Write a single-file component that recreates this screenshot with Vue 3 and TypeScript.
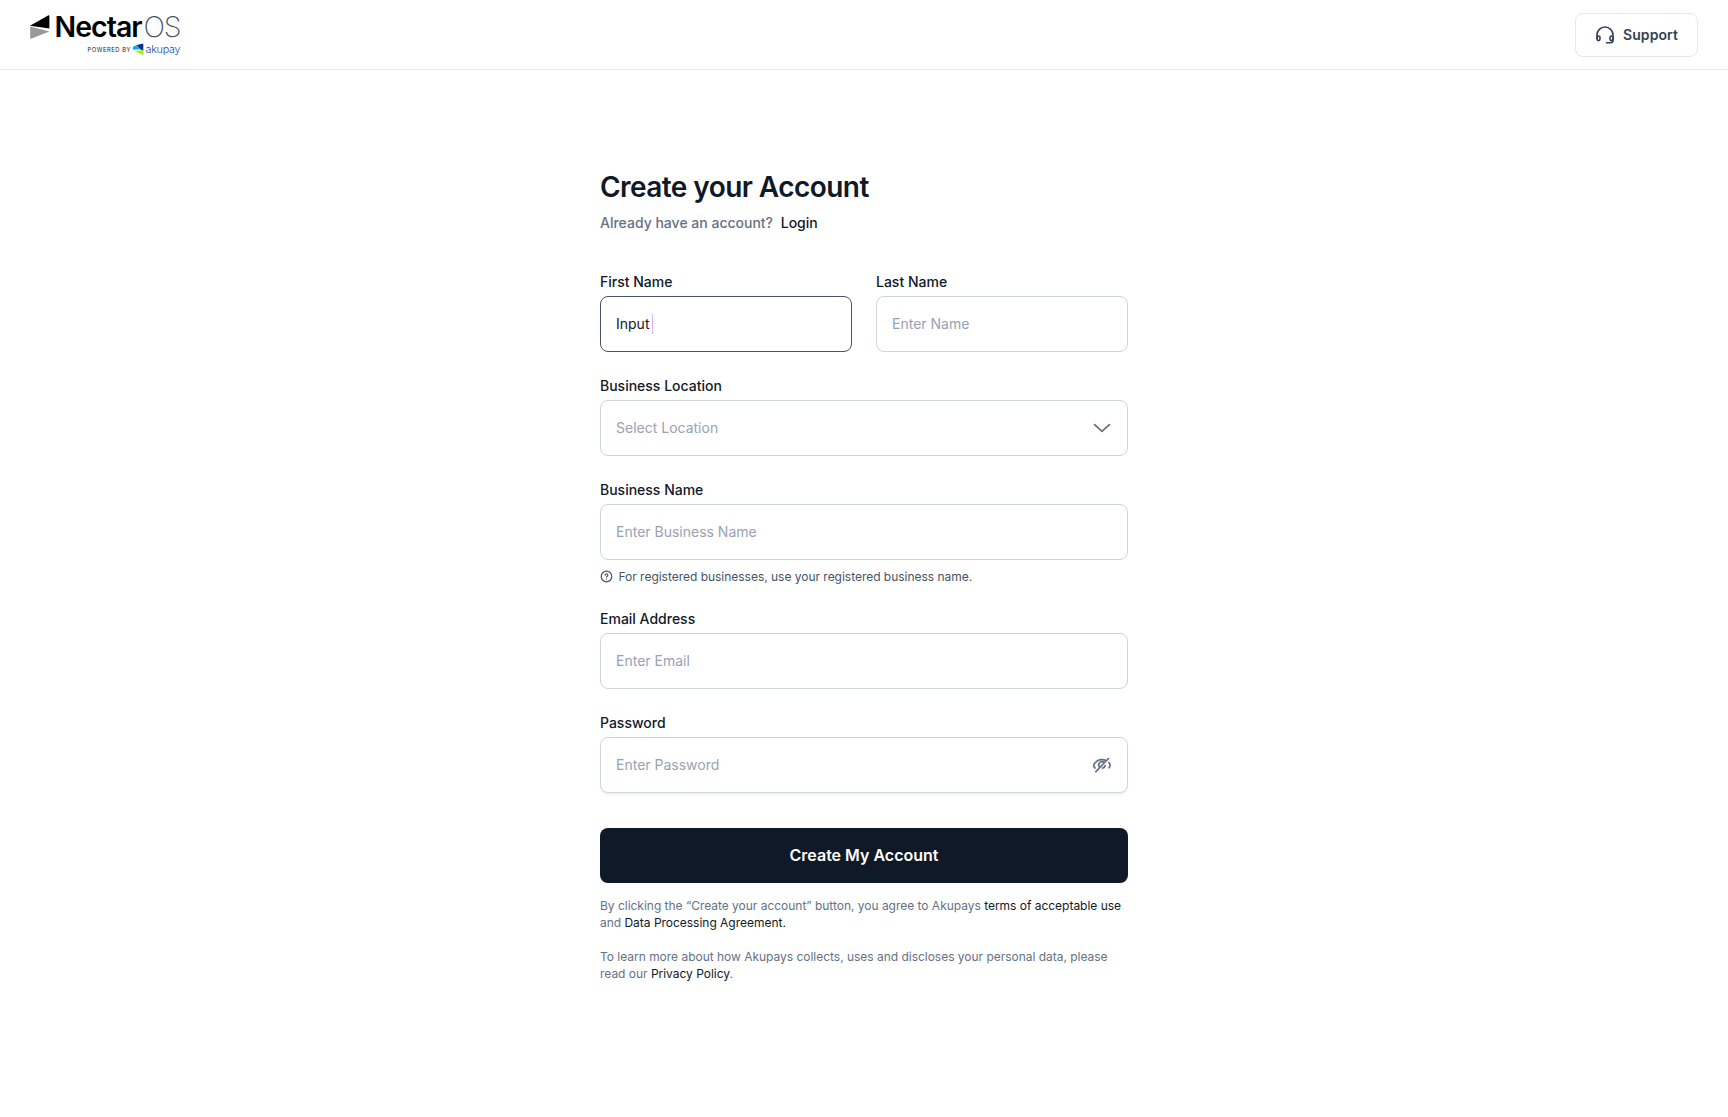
<script setup lang="ts">
import { ref } from 'vue';

// Form state
const firstName = ref('Input');
const lastName = ref('');
const businessName = ref('');
const email = ref('');
const password = ref('');
const showPassword = ref(false);

const togglePassword = () => {
  showPassword.value = !showPassword.value;
};
</script>

<template>
  <div class="page">
    <header class="header">
      <svg class="logo" width="152" height="44" viewBox="0 0 152 44" role="img" aria-label="NectarOS powered by akupay">
        <path d="M0 10.800 18.500 0.200q.9-.3.900.6v12.600z" fill="#000" />
        <path d="M.2 11.500 19.400 16.500 1 23.700q-.8.200-.8-.600z" fill="#999" />
        <text class="logo-name" x="24.600" y="22.200" textLength="88">Nectar</text>
        <text class="logo-os" x="113.500" y="22.200" textLength="38">OS</text>
        <text class="logo-powered" x="57.500" y="36.900" textLength="43">POWERED BY</text>
        <path d="M106.500 30 113.300 28.600v7.200l-3.300-1.600z" fill="#0a2f8f" />
        <path d="M102.800 31.800 107 30 110.200 34.300 102.800 34.700z" fill="#18a5e8" />
        <path d="M104.200 35.700 113.300 35.200v5z" fill="#a4ee1a" />
        <text class="logo-akupay" x="115.500" y="38" textLength="35">akupay</text>
      </svg>
      <button class="support-button" type="button">
        <svg width="20" height="20" viewBox="0 0 20 20" fill="none" stroke="currentColor" stroke-width="1.600" stroke-linecap="round" stroke-linejoin="round">
          <path d="M2 13.500V10a8 8 0 0 1 16 0v5.300a2.500 2.500 0 0 1-2.500 2.500H11.500" />
          <rect x="2" y="11" width="3" height="4.600" rx="1.500" />
          <rect x="15" y="11" width="3" height="4.600" rx="1.500" />
        </svg>
        <span>Support</span>
      </button>
    </header>

    <main class="content">
      <h1 class="title">Create your Account</h1>
      <p class="subtitle">Already have an account? <a class="login">Login</a></p>

      <form class="form" @submit.prevent>
        <div class="row">
          <div class="field">
            <label class="label">First Name</label>
            <div class="control focused">
              <span class="value">{{ firstName }}</span>
              <span class="caret"></span>
            </div>
          </div>
          <div class="field">
            <label class="label" for="last-name">Last Name</label>
            <div class="control">
              <input id="last-name" v-model="lastName" type="text" placeholder="Enter Name" />
            </div>
          </div>
        </div>

        <div class="field">
          <label class="label">Business Location</label>
          <div class="control">
            <span class="placeholder">Select Location</span>
            <svg class="icon" width="20" height="20" viewBox="0 0 20 20" fill="none" stroke="currentColor" stroke-width="1.800" stroke-linecap="round" stroke-linejoin="round">
              <path d="M2.600 6.700 10 13.400l7.400-6.700" />
            </svg>
          </div>
        </div>

        <div class="field">
          <label class="label" for="business-name">Business Name</label>
          <div class="control">
            <input id="business-name" v-model="businessName" type="text" placeholder="Enter Business Name" />
          </div>
          <div class="hint">
            <svg width="13" height="13" viewBox="0 0 13 13" fill="none" stroke="currentColor" stroke-width="1.200" stroke-linecap="round">
              <circle cx="6.500" cy="6.500" r="5.300" />
              <path d="M5.200 5.200a1.300 1.300 0 1 1 2 1.100c-.5.300-.7.500-.7.900M6.500 9v.1" />
            </svg>
            <span>For registered businesses, use your registered business name.</span>
          </div>
        </div>

        <div class="field">
          <label class="label" for="email">Email Address</label>
          <div class="control">
            <input id="email" v-model="email" type="text" placeholder="Enter Email" />
          </div>
        </div>

        <div class="field">
          <label class="label" for="password">Password</label>
          <div class="control raised">
            <input id="password" v-model="password" :type="showPassword ? 'text' : 'password'" placeholder="Enter Password" />
            <svg class="icon" width="20" height="20" viewBox="0 0 20 20" fill="none" stroke="currentColor" stroke-width="1.700" stroke-linecap="round" @click="togglePassword">
              <path d="M3 13C1.300 11.500 1.300 9.800 2.800 8.200c3.300-4 8-4.600 11.400-2.400M16.800 7.500c1.700 1.800 1.700 3.300.3 5.200M7.500 12.200a3.300 3.300 0 0 1 4.800-4.500M13.200 10.500a3.300 3.300 0 0 1-2.700 2.700M3.800 16.700 16.500 3.500" />
            </svg>
          </div>
        </div>

        <button class="submit-button" type="submit">Create My Account</button>
      </form>

      <p class="legal">
        By clicking the “Create your account” button, you agree to Akupays <a>terms of acceptable use</a><br />
        and <a>Data Processing Agreement.</a>
      </p>
      <p class="legal">
        To learn more about how Akupays collects, uses and discloses your personal data, please<br />
        read our <a>Privacy Policy</a>.
      </p>
    </main>
  </div>
</template>

<style>
body {
  background: #fff;
}
</style>

<style scoped>
.page {
  min-height: 1117px;
  background: #fff;
  color: #101928;
  font-family: Inter, 'Liberation Sans', sans-serif;
}

.header {
  display: flex;
  align-items: center;
  justify-content: space-between;
  box-sizing: border-box;
  height: 70px;
  padding: 0 30px;
  border-bottom: 1px solid #e4e7ec;
}

.logo {
  margin-top: 5px;
  overflow: visible;
}

.logo-name {
  font-size: 28.5px;
  font-weight: 600;
  fill: #000;
}

.logo-os {
  font-size: 28.5px;
  font-weight: 200;
  fill: #475367;
}

.logo-powered {
  font-size: 5.8px;
  font-weight: 400;
  fill: #222;
}

.logo-akupay {
  font-size: 10.8px;
  font-weight: 300;
  fill: #2449a8;
}

.support-button {
  display: flex;
  align-items: center;
  justify-content: center;
  gap: 8px;
  box-sizing: border-box;
  width: 123px;
  height: 44px;
  padding: 0;
  border: 1px solid #e4e7ec;
  border-radius: 8px;
  background: #fff;
  color: #344054;
  font: 600 14px/20px Inter, sans-serif;
  letter-spacing: 0.1px;
}

.content {
  width: 528px;
  margin: 0 auto;
  padding-top: 97px;
}

.title {
  margin: 0;
  font-size: 28px;
  font-weight: 600;
  line-height: 40px;
  letter-spacing: -0.56px;
}

.subtitle {
  margin: 6px 0 0;
  color: #667185;
  font-size: 14px;
  font-weight: 500;
  line-height: 20px;
}

.login {
  margin-left: 4px;
  color: #101928;
}

.form {
  display: flex;
  flex-direction: column;
  gap: 24px;
  margin-top: 39px;
}

.row {
  display: grid;
  grid-template-columns: 1fr 1fr;
  gap: 24px;
}

.field {
  display: flex;
  flex-direction: column;
  gap: 4px;
}

.label {
  font-size: 14px;
  font-weight: 500;
  line-height: 20px;
}

.control {
  display: flex;
  align-items: center;
  box-sizing: border-box;
  height: 56px;
  padding: 0 15px;
  border: 1px solid #d0d5dd;
  border-radius: 8px;
  background: #fff;
  font-size: 14px;
  line-height: 20px;
}

.control.focused {
  border-color: #475367;
}

.control.raised {
  box-shadow: 0 2px 2px rgba(16, 25, 40, 0.05);
}

.control input {
  flex: 1;
  min-width: 0;
  padding: 0;
  border: none;
  outline: none;
  background: none;
  color: #101928;
  font: inherit;
}

.control input::placeholder {
  color: #98a2b3;
  opacity: 1;
}

.placeholder {
  flex: 1;
  color: #98a2b3;
}

.caret {
  width: 1px;
  height: 20px;
  margin-left: 3px;
  background: #d8b4fe;
}

.icon {
  flex: none;
  color: #667185;
}

.hint {
  display: flex;
  align-items: center;
  gap: 5.5px;
  margin-top: 4px;
  color: #475367;
  font-size: 12px;
  line-height: 17px;
  letter-spacing: -0.02px;
}

.submit-button {
  height: 55px;
  margin-top: 11px;
  padding: 0 0 1px;
  border: none;
  border-radius: 8px;
  background: #101928;
  color: #fff;
  font: 600 16px/24px Inter, sans-serif;
}

.legal {
  margin: 14px 0 0;
  color: #667185;
  font-size: 12px;
  line-height: 17px;
  letter-spacing: -0.02px;
  white-space: nowrap;
}

.legal + .legal {
  margin-top: 17px;
}

.legal a {
  color: #101928;
}
</style>
